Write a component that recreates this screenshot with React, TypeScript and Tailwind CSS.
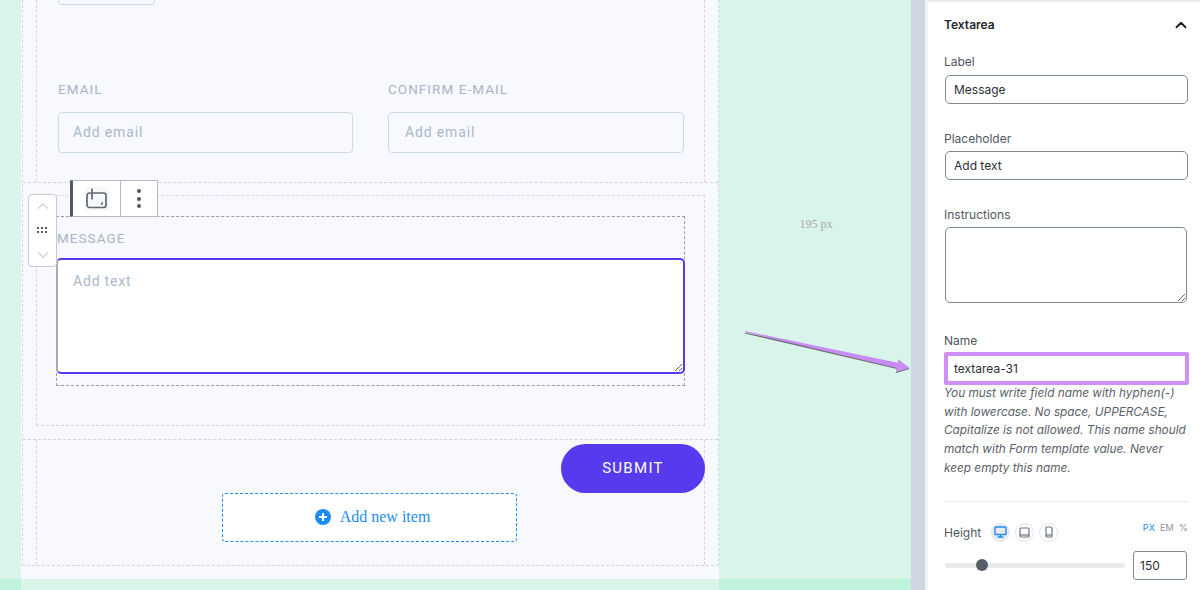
import { ChevronDown, ChevronUp } from 'lucide-react';

function TextField({ value }: { value: string }) {
  return (
    <input
      readOnly
      value={value}
      className="block ml-px w-[242.5px] h-[29px] px-[8px] bg-white border border-[#7e8993] rounded-[5px] text-xs text-[#2b2f36] outline-none"
    />
  );
}

function FormField({ label, placeholder, inputClass }: { label: string; placeholder: string; inputClass: string }) {
  return (
    <div>
      <div className="h-[23px] text-[13.5px] leading-[23px] tracking-[1.05px] text-[#a9b4c4]">{label}</div>
      <input
        readOnly
        placeholder={placeholder}
        className={`block mt-[11px] w-full h-[41px] pr-[14px] pb-px bg-transparent border border-[#cfd9e6] rounded-[4px] text-sm tracking-[0.85px] placeholder-[#a9b8cc] outline-none ${inputClass}`}
      />
    </div>
  );
}

function DeviceButton({ active, children }: { active?: boolean; children: React.ReactNode }) {
  return (
    <span
      className={`w-[19px] h-[19px] rounded-full flex items-center justify-center border ${
        active ? 'bg-[#e7e9ee] border-[#e7e9ee] text-[#1d8cf0]' : 'bg-white border-[#e2e4e9] text-[#6b7280]'
      }`}
    >
      {children}
    </span>
  );
}

function Toolbar() {
  return (
    <div className="absolute left-[70px] top-[180px] h-[37px] w-[88px] flex bg-white border border-[#b4b9bf] border-l-[3px] border-l-[#4f5965]">
      <div className="w-[48px] flex items-center justify-center border-r border-[#b4b9bf]">
        <span className="w-6 h-6 rounded-[3px] bg-[#f7f8fa] flex items-center justify-center">
          <svg width="21" height="21" viewBox="0 0 21 21" fill="none">
            <rect x="1" y="5" width="19" height="14.5" rx="2.5" stroke="#5e6974" strokeWidth="1.7" />
            <path d="M6 .5v11" stroke="#5e6974" strokeWidth="1.7" />
            <path d="M17 13.5v3h-3z" fill="#5e6974" />
          </svg>
        </span>
      </div>
      <div className="flex-1 flex flex-col items-center justify-center gap-[3.5px]">
        <span className="w-1 h-1 rounded-full bg-[#4f5965]" />
        <span className="w-1 h-1 rounded-full bg-[#4f5965]" />
        <span className="w-1 h-1 rounded-full bg-[#4f5965]" />
      </div>
    </div>
  );
}

function Mover() {
  return (
    <div className="absolute left-[28px] top-[194px] w-[29px] h-[73px] bg-white border border-[#c5cad0] rounded-[4px] flex flex-col items-center justify-between py-[2px]">
      <ChevronUp className="w-[18px] h-[18px] text-[#d3d7dc]" strokeWidth={2} />
      <svg width="11" height="7" viewBox="0 0 11 7" fill="#4f5965">
        <rect x="0" y="0" width="2" height="2" />
        <rect x="4" y="0" width="2" height="2" />
        <rect x="8" y="0" width="2" height="2" />
        <rect x="0" y="4" width="2" height="2" />
        <rect x="4" y="4" width="2" height="2" />
        <rect x="8" y="4" width="2" height="2" />
      </svg>
      <ChevronDown className="w-[18px] h-[18px] text-[#d3d7dc]" strokeWidth={2} />
    </div>
  );
}

function Arrow() {
  return (
    <svg className="absolute left-[740px] top-[325px]" width="175" height="55" viewBox="0 0 175 55" fill="none">
      <path d="M5 6.5 L159 38 L158 34 L169.5 43 L156 47 L157 43 L5 7.5 Z" fill="#6f6f78" transform="translate(0 1)" />
      <path d="M5 6 L159 38 L158 34 L169.5 43 L156 47 L157 43 L5 7 Z" fill="#c88df5" />
    </svg>
  );
}

export default function App() {
  return (
    <div className="relative w-[1200px] h-[590px] overflow-hidden flex font-['Roboto',sans-serif] bg-white">
      {/* editor canvas */}
      <div className="w-[911px] flex flex-col">
        <div className="flex h-[579px]">
          <div className="w-[21px] bg-[#d9f5ea]" />
          <div className="w-[698px] bg-[#f8f9fe]">
            <div className="ml-px h-[566px] flex flex-col border-x border-b border-dashed border-[#d3d5de]">
              {/* email row */}
              <div className="h-[182px] mx-[13px] border-x border-dashed border-[#d3d5de] pl-[21px] pr-[20px]">
                <div className="w-[97px] h-[5px] border-x border-b border-[#cfd9e6] rounded-b-[4px]" />
                <div className="mt-[73px] grid grid-cols-[295px_296px] gap-x-[35px]">
                  <FormField label="EMAIL" placeholder="Add email" inputClass="pl-[14px]" />
                  <FormField label="CONFIRM E-MAIL" placeholder="Add email" inputClass="pl-[16px]" />
                </div>
              </div>
              {/* selected textarea block */}
              <div className="h-[258px] pt-3 border-y border-dashed border-[#d3d5de]">
                <div className="h-[231px] mx-[13px] pt-5 border-x border-y border-dashed border-[#d3d5de] border-t-[#d9dbe3]">
                  <div className="h-[170px] mx-[19px] border border-dashed border-[#9b9ba1]">
                    <div className="h-[41px] pt-[11px] text-[13.5px] leading-[20px] tracking-[1.05px] text-[#a9b4c4]">MESSAGE</div>
                    <textarea
                      readOnly
                      placeholder="Add text"
                      className="block -ml-px w-[629px] h-[116px] px-[15px] py-[11px] bg-white border-2 border-[#553aee] border-l-[#a8a8ae] rounded-[5px] text-sm tracking-[0.8px] placeholder-[#a9b8cc] outline-none resize-y"
                    />
                  </div>
                </div>
              </div>
              {/* submit and add item */}
              <div className="flex-1 mx-[13px] border-x border-dashed border-[#d3d5de]">
                <div className="flex justify-end mt-1 -mr-px">
                  <button className="w-[144px] h-[49px] rounded-full bg-[#553aee] text-white text-[15px] tracking-[1.3px]">SUBMIT</button>
                </div>
                <div className="flex justify-center -ml-[2px]">
                  <button className="w-[295px] h-[49px] pl-[6px] pb-[2px] flex items-center justify-center gap-[9px] bg-white border border-dashed border-[#1d8cf0] rounded-[3px] text-[#1d8cf0] font-['Liberation_Serif',serif] text-base">
                    <svg width="16" height="16" viewBox="0 0 16 16">
                      <circle cx="8" cy="8" r="8" fill="#1d8cf0" />
                      <path d="M8 4v8M4 8h8" stroke="#fff" strokeWidth="2" />
                    </svg>
                    Add new item
                  </button>
                </div>
              </div>
            </div>
          </div>
          <div className="w-[192px] bg-[#d9f5ea] pl-[2px] pt-[216px] text-center font-['Liberation_Serif',serif] text-xs leading-4 text-[#a8aaa8]">195 px</div>
        </div>
        <div className="flex h-[11px]">
          <div className="w-[21px] bg-[#c0f3dc]" />
          <div className="w-[698px] bg-[#d9f5ea]" />
          <div className="w-[192px] bg-[#c0f3dc]" />
        </div>
      </div>

      <div className="w-[14px] bg-[#cfd6e3]" />

      {/* settings sidebar */}
      <div className="w-[275px] h-[590px] border-l-[3px] border-[#f2f3f6] font-['Inter',sans-serif]">
        <div className="h-[2px] bg-[#e8eaed]" />
        <div className="pl-4 pr-3 text-xs text-[#50575e]">
          <div className="h-[46px] flex items-center justify-between">
            <span className="font-semibold text-xs text-[#23282d]">Textarea</span>
            <ChevronUp className="w-[18px] h-[18px] text-[#1e1e1e] -mr-[2px]" strokeWidth={2.5} />
          </div>
          <div className="h-[27px] leading-[27px]">Label</div>
          <TextField value="Message" />
          <div className="mt-[21px] h-[26px] leading-[27px]">Placeholder</div>
          <TextField value="Add text" />
          <div className="mt-[21px] h-[26px] leading-[27px]">Instructions</div>
          <textarea readOnly className="block ml-px w-[242px] h-[76px] bg-white border border-[#7e8993] rounded-[5px] outline-none resize-y" />
          <div className="mt-[25px] h-[24px] leading-[25px]">Name</div>
          <input
            readOnly
            value="textarea-31"
            className="block w-[245px] h-[33px] px-[6px] bg-white border-[4px] border-[#d08ff6] rounded-[2px] text-xs text-[#2b2f36] outline-none"
          />
          <p className="-mt-[1px] w-[246px] text-[11.8px] leading-[18.7px] italic text-[#5a6068]">
            You must write field name with hyphen(-) with lowercase. No space, UPPERCASE, Capitalize is not allowed. This name should match with Form template value. Never keep empty this name.
          </p>
          <div className="mt-[23px] h-px bg-[#e8eaed]" />
          <div className="mt-[21px] flex items-start justify-between">
            <div className="flex items-center gap-[5px]">
              <span className="mr-[5px] leading-[19px] text-xs">Height</span>
              <DeviceButton active>
                <svg width="13" height="12" viewBox="0 0 13 12" fill="none" stroke="currentColor" strokeWidth="1.4">
                  <rect x="1" y="1" width="11" height="7.5" rx="0.8" />
                  <path d="M6.5 8.5V11M3.5 11h6" />
                </svg>
              </DeviceButton>
              <DeviceButton>
                <svg width="11" height="11" viewBox="0 0 11 11" fill="none" stroke="currentColor" strokeWidth="1.2">
                  <rect x="1" y="1" width="9" height="9" rx="1" />
                  <path d="M1 8h9" />
                </svg>
              </DeviceButton>
              <DeviceButton>
                <svg width="8" height="12" viewBox="0 0 8 12" fill="none" stroke="currentColor" strokeWidth="1.2">
                  <rect x="1" y="1" width="6" height="10" rx="1" />
                  <path d="M1 9h6" />
                </svg>
              </DeviceButton>
            </div>
            <div className="-mt-[2px] flex gap-[5px] text-[9px] leading-[14px] tracking-[0.2px] text-[#8a939d]">
              <span className="text-[#1d8cf0]">PX</span>
              <span>EM</span>
              <span>%</span>
            </div>
          </div>
          <div className="mt-[9px] pr-px flex items-center justify-between">
            <div className="relative w-[180px] ml-px h-[5px] rounded-full bg-[#e8eaee]">
              <span className="absolute left-[31px] -top-1 w-3 h-3 rounded-full bg-[#555d66]" />
            </div>
            <input readOnly value="150" className="block w-[54px] h-[29px] px-[6px] bg-white border border-[#7e8993] rounded-[3px] text-xs text-[#2b2f36] outline-none" />
          </div>
        </div>
      </div>

      <Toolbar />
      <Mover />
      <Arrow />
    </div>
  );
}
